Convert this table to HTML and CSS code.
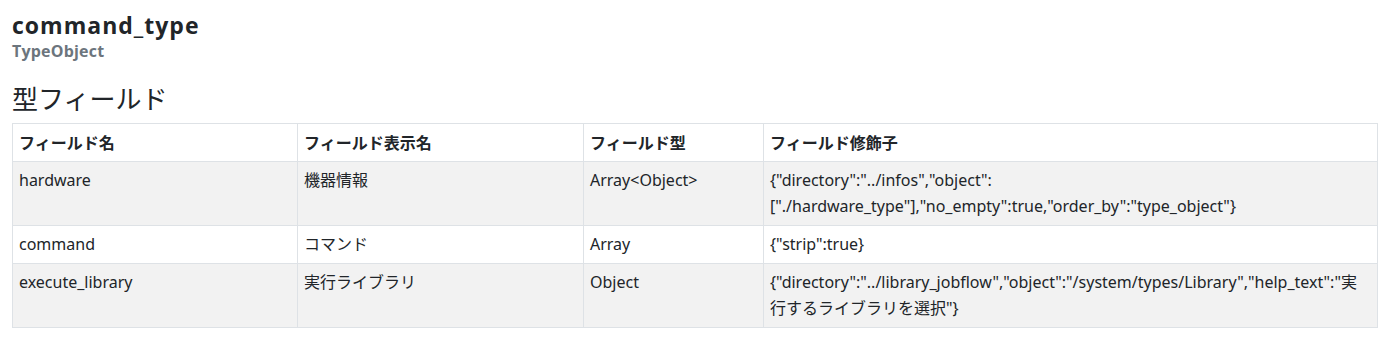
FILE: index.html
```html
<!DOCTYPE html>
<html lang="ja">
<head>
<meta charset="utf-8">
<link rel="stylesheet" href="styles.css">
</head>
<body>
<div class="page">
  <header class="type-head">
    <h1 class="type-name">command_type</h1>
    <div class="type-kind">TypeObject</div>
  </header>
  <h3 class="section-title">型フィールド</h3>
  <table class="fields">
    <colgroup>
      <col class="c1"><col class="c2"><col class="c3"><col class="c4">
    </colgroup>
    <thead>
      <tr><th>フィールド名</th><th>フィールド表示名</th><th>フィールド型</th><th>フィールド修飾子</th></tr>
    </thead>
    <tbody>
      <tr class="odd"><td>hardware</td><td>機器情報</td><td>Array&lt;Object&gt;</td><td>{"directory":"../infos","object":["./hardware_type"],"no_empty":true,"order_by":"type_object"}</td></tr>
      <tr><td>command</td><td>コマンド</td><td>Array</td><td>{"strip":true}</td></tr>
      <tr class="odd"><td>execute_library</td><td>実行ライブラリ</td><td>Object</td><td>{"directory":"../library_jobflow","object":"/system/types/Library","help_text":"実行するライブラリを選択"}</td></tr>
    </tbody>
  </table>
</div>
</body>
</html>
```

FILE: styles.css
```css
html, body {
  margin: 0;
  padding: 0;
  background: #fff;
}
body {
  font-family: "Noto Sans", "Noto Sans CJK JP", sans-serif;
  font-size: 16px;
  color: #212529;
}
.page {
  padding: 10px 15px 0 12px;
}
.type-head {
  display: flex;
  flex-direction: column;
}
.type-name {
  margin: 0;
  font-family: "Open Sans", "Noto Sans CJK JP", sans-serif;
  font-size: 23px;
  font-weight: 700;
  letter-spacing: 1px;
  line-height: 31px;
}
.type-kind {
  font-family: "Open Sans", sans-serif;
  font-size: 16px;
  font-weight: 700;
  letter-spacing: 0.2px;
  color: #6c757d;
  line-height: 20px;
}
.section-title {
  margin: 20px 0 8px;
  font-family: "Noto Sans CJK JP", sans-serif;
  font-size: 26px;
  font-weight: 400;
  line-height: 34px;
}
.fields {
  width: 1365px;
  border-collapse: collapse;
  table-layout: fixed;
}
.c1 { width: 285px; }
.c2 { width: 286px; }
.c3 { width: 180px; }
.c4 { width: 614px; }
.fields th, .fields td {
  border: 1px solid #dee2e6;
  padding: 5px 6px 6px;
  line-height: 26px;
  text-align: left;
  vertical-align: top;
}
.fields th {
  font-family: "Noto Sans CJK JP", sans-serif;
  font-weight: 700;
}
.fields tr.odd td {
  background: #f2f2f2;
}
```
